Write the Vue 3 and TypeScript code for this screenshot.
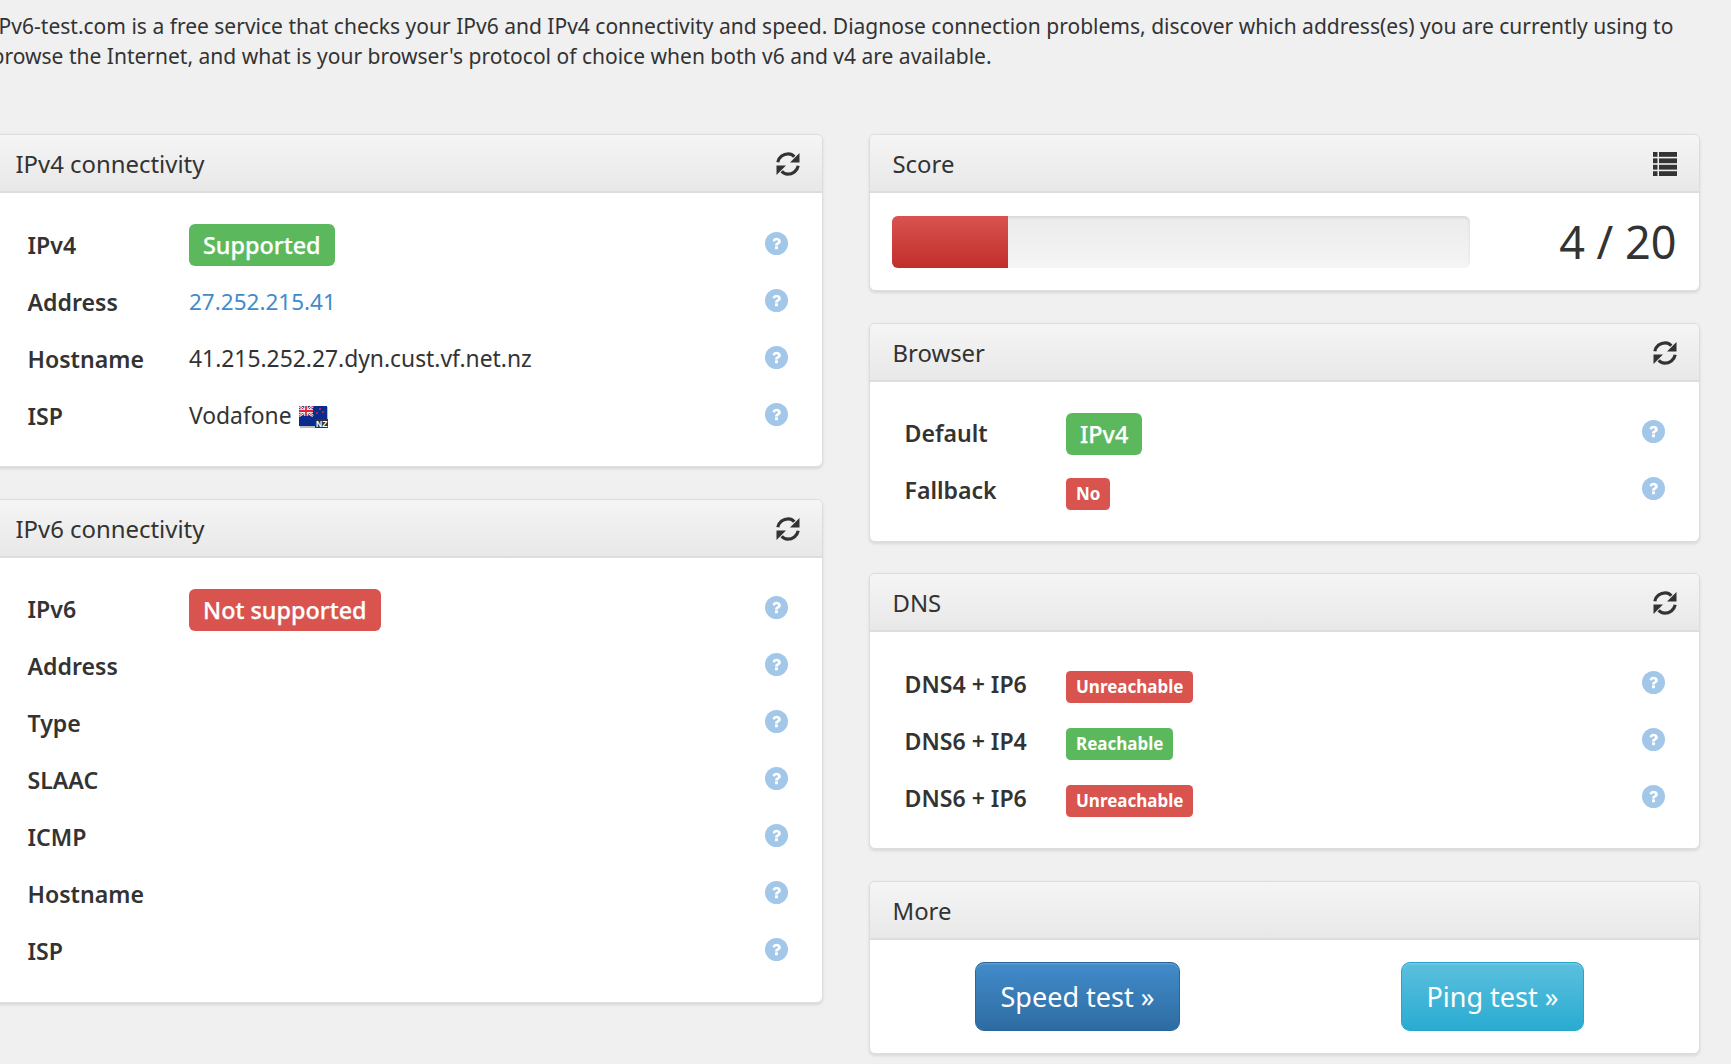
<script setup lang="ts">
type Badge = { text: string; tone: 'ok' | 'bad'; size: 'lg' | 'sm' }
type Row = { label: string; badge?: Badge; text?: string; link?: boolean; flag?: boolean }

const questionPath =
  'M1024 1376v-192q0-14-9-23t-23-9h-192q-14 0-23 9t-9 23v192q0 14 9 23t23 9h192q14 0 23-9t9-23zm256-672q0-88-55.500-163t-138.500-116-170-41q-243 0-371 213-15 24 8 42l132 100q7 6 19 6 16 0 25-12 53-68 86-92 34-24 86-24 48 0 85.500 26t37.500 59q0 38-20 61t-68 45q-63 28-115.500 86.500t-52.500 125.500v36q0 14 9 23t23 9h192q14 0 23-9t9-23q0-19 21.500-49.500t54.500-49.500q32-18 49-28.500t46-35 44.500-48 28-60.500 12.500-81z'

const ipv4: Row[] = [
  { label: 'IPv4', badge: { text: 'Supported', tone: 'ok', size: 'lg' } },
  { label: 'Address', text: '27.252.215.41', link: true },
  { label: 'Hostname', text: '41.215.252.27.dyn.cust.vf.net.nz' },
  { label: 'ISP', text: 'Vodafone', flag: true },
]
const ipv6: Row[] = [
  { label: 'IPv6', badge: { text: 'Not supported', tone: 'bad', size: 'lg' } },
  { label: 'Address' },
  { label: 'Type' },
  { label: 'SLAAC' },
  { label: 'ICMP' },
  { label: 'Hostname' },
  { label: 'ISP' },
]
const browser: Row[] = [
  { label: 'Default', badge: { text: 'IPv4', tone: 'ok', size: 'lg' } },
  { label: 'Fallback', badge: { text: 'No', tone: 'bad', size: 'sm' } },
]
const dns: Row[] = [
  { label: 'DNS4 + IP6', badge: { text: 'Unreachable', tone: 'bad', size: 'sm' } },
  { label: 'DNS6 + IP4', badge: { text: 'Reachable', tone: 'ok', size: 'sm' } },
  { label: 'DNS6 + IP6', badge: { text: 'Unreachable', tone: 'bad', size: 'sm' } },
]
const columns = [
  [
    { title: 'IPv4 connectivity', rows: ipv4 },
    { title: 'IPv6 connectivity', rows: ipv6 },
  ],
  [
    { title: 'Score', score: true },
    { title: 'Browser', rows: browser },
    { title: 'DNS', rows: dns },
    { title: 'More', more: true },
  ],
] as { title: string; rows?: Row[]; score?: boolean; more?: boolean }[][]
</script>

<template>
  <div class="page">
    <p class="intro">
      IPv6-test.com is a free service that checks your IPv6 and IPv4 connectivity and speed. Diagnose connection problems, discover which address(es) you are currently using to browse the Internet, and what is your browser's protocol of choice when both v6 and v4 are available.
    </p>
    <div class="grid">
      <div v-for="(col, c) in columns" :key="c" class="col">
        <section v-for="panel in col" :key="panel.title" class="panel">
          <header class="head">
            <h3>{{ panel.title }}</h3>
            <svg v-if="panel.score" class="tool" viewBox="0 0 24 25" width="24" height="25">
              <g fill="#333">
                <rect v-for="y in [0, 6.4, 12.8, 19.2]" :key="y" x="0" :y="y" width="4.5" height="4.8" />
                <rect v-for="y in [0, 6.4, 12.8, 19.2]" :key="'b' + y" x="6" :y="y" width="18" height="4.8" />
              </g>
            </svg>
            <svg v-else-if="panel.rows" class="tool" viewBox="0 0 24 24" width="24" height="24">
              <g v-for="angle in [0, 180]" :key="angle" :transform="`rotate(${angle} 12 12)`" fill="#333">
                <path d="M1.800 10.300C2.800 5 7.400 1.800 12.300 1.800C14.800 1.800 16.900 3 18.300 4.700" fill="none" stroke="#333" stroke-width="3.200" />
                <path d="M23.500 1V10.500H14Z" />
              </g>
            </svg>
          </header>

          <div v-if="panel.rows" class="body rows">
            <div v-for="row in panel.rows" :key="row.label" class="row">
              <span class="label">{{ row.label }}</span>
              <span class="value">
                <span v-if="row.badge" class="badge" :class="[row.badge.tone, row.badge.size]">{{ row.badge.text }}</span>
                <a v-else-if="row.link" class="link">{{ row.text }}</a>
                <template v-else>{{ row.text }}</template>
                <svg v-if="row.flag" class="flag" viewBox="0 0 29 22" width="29" height="22">
                  <rect x="1" y="1" width="28" height="21" fill="#bbb" />
                  <rect width="28" height="20" y="0" fill="#0a2a8c" />
                  <rect x="0" y="0" width="14" height="10" fill="#27408f" />
                  <path d="M0 0L14 10M14 0L0 10" stroke="#fff" stroke-width="2.400" />
                  <path d="M0 0L14 10M14 0L0 10" stroke="#d8283c" stroke-width="1" />
                  <path d="M7 0V10M0 5H14" stroke="#fff" stroke-width="3.400" />
                  <path d="M7 0V10M0 5H14" stroke="#d8283c" stroke-width="1.800" />
                  <circle cx="21" cy="3" r="1" fill="#e23" />
                  <circle cx="18" cy="7" r="1" fill="#e23" />
                  <circle cx="24" cy="6" r="1" fill="#e23" />
                  <rect x="16" y="13" width="13" height="9" fill="#333" />
                  <text x="17" y="21" font-size="8.500" font-weight="700" font-family="'Liberation Sans', sans-serif" fill="#fff">NZ</text>
                </svg>
              </span>
              <svg class="help" viewBox="0 0 1792 1792" width="23" height="23">
                <circle cx="896" cy="896" r="896" fill="#a3c7e8" />
                <path fill="#fff" transform="translate(896 896) scale(.88) translate(-896 -900)" :d="questionPath" />
              </svg>
            </div>
          </div>

          <div v-else-if="panel.score" class="body score">
            <div class="progress"><div class="fill" :style="{ width: '20.2%' }"></div></div>
            <span class="points">4 / 20</span>
          </div>

          <div v-else class="body more">
            <a class="btn blue">Speed test »</a>
            <a class="btn cyan">Ping test »</a>
          </div>
        </section>
      </div>
    </div>
  </div>
</template>

<style>
html, body { background: #f0f0f0; overflow: hidden; }
</style>

<style scoped>
.page {
  width: 1731px;
  height: 1064px;
  overflow: hidden;
  box-sizing: border-box;
  background: #f0f0f0;
  color: #333;
  font: 21px/30px "Noto Sans", sans-serif;
}
.intro {
  margin: 11px 0 0 -8.5px;
  width: 1700px;
  font-size: 21.03px;
}
.grid {
  margin: 63px 0 0 -8px;
  width: 1710px;
  display: grid;
  grid-template-columns: 831px 831px;
  column-gap: 46px;
}
.col { display: flex; flex-direction: column; gap: 31.5px; }
.panel {
  background: #fff;
  border: 1.5px solid #ddd;
  border-radius: 6px;
  box-shadow: 0 1.5px 3px rgba(0, 0, 0, 0.1);
  overflow: hidden;
}
.head {
  height: 58px;
  box-sizing: border-box;
  padding: 2px 22.5px 0;
  display: flex;
  align-items: center;
  justify-content: space-between;
  background: linear-gradient(#f5f5f5, #e8e8e8);
  border-bottom: 2px solid #ddd;
}
h3 { margin: 0; font-size: 23.9px; font-weight: 400; line-height: 26px; }
.body { padding: 22.5px; }
.rows { padding: 23.5px 22.5px 21.5px; }
.row {
  height: 57px;
  display: flex;
  align-items: center;
  padding: 0 10px 0 12px;
  font-size: 22.85px;
}
.label { width: 161.5px; font-weight: 600; flex: none; font-size: 23.1px; margin-top: -1px; }
.value { flex: 1; display: flex; align-items: center; gap: 7px; }
.link { color: #428bca; font-size: 22.5px; }
.help { flex: none; margin-top: -4px; margin-right: 1.5px; }
.flag { margin-top: 2px; }
.badge { color: #fff; border-radius: 6px; font-weight: 500; display: inline-block; -webkit-text-stroke: 0.25px #fff; }
.badge.lg { font-size: 23.4px; line-height: 32px; padding: 5px 14px; }
.badge.sm { font-size: 17px; line-height: 22px; padding: 5px 10px; border-radius: 4.5px; margin-top: 6px; font-weight: 700; -webkit-text-stroke: 0; }
.ok { background: #5cb85c; }
.bad { background: #d9534f; }
.score { display: flex; align-items: center; justify-content: space-between; }
.progress {
  width: 578px;
  height: 52px;
  margin-left: -1px;
  border-radius: 6px;
  overflow: hidden;
  background: linear-gradient(#ebebeb, #f5f5f5);
  box-shadow: inset 0 1.5px 3px rgba(0, 0, 0, 0.1);
}
.fill { height: 100%; background: linear-gradient(#d9534f, #c12e2a); }
.points { font-size: 45px; line-height: 50px; }
.more {
  display: flex;
  justify-content: space-between;
  padding: 22px 115px 22px 105px;
}
.btn {
  height: 69px;
  box-sizing: border-box;
  display: flex;
  align-items: center;
  padding: 2px 24.5px 0;
  font-size: 27px;
  color: #fff;
  border-radius: 9px;
  border: 1.5px solid;
  box-shadow: inset 0 1.5px 0 rgba(255, 255, 255, 0.15);
}
.blue { background: linear-gradient(#428bca, #2d6ca2); border-color: #2b669a; }
.cyan { background: linear-gradient(#5bc0de, #2aabd2); border-color: #28a4c9; }
</style>
